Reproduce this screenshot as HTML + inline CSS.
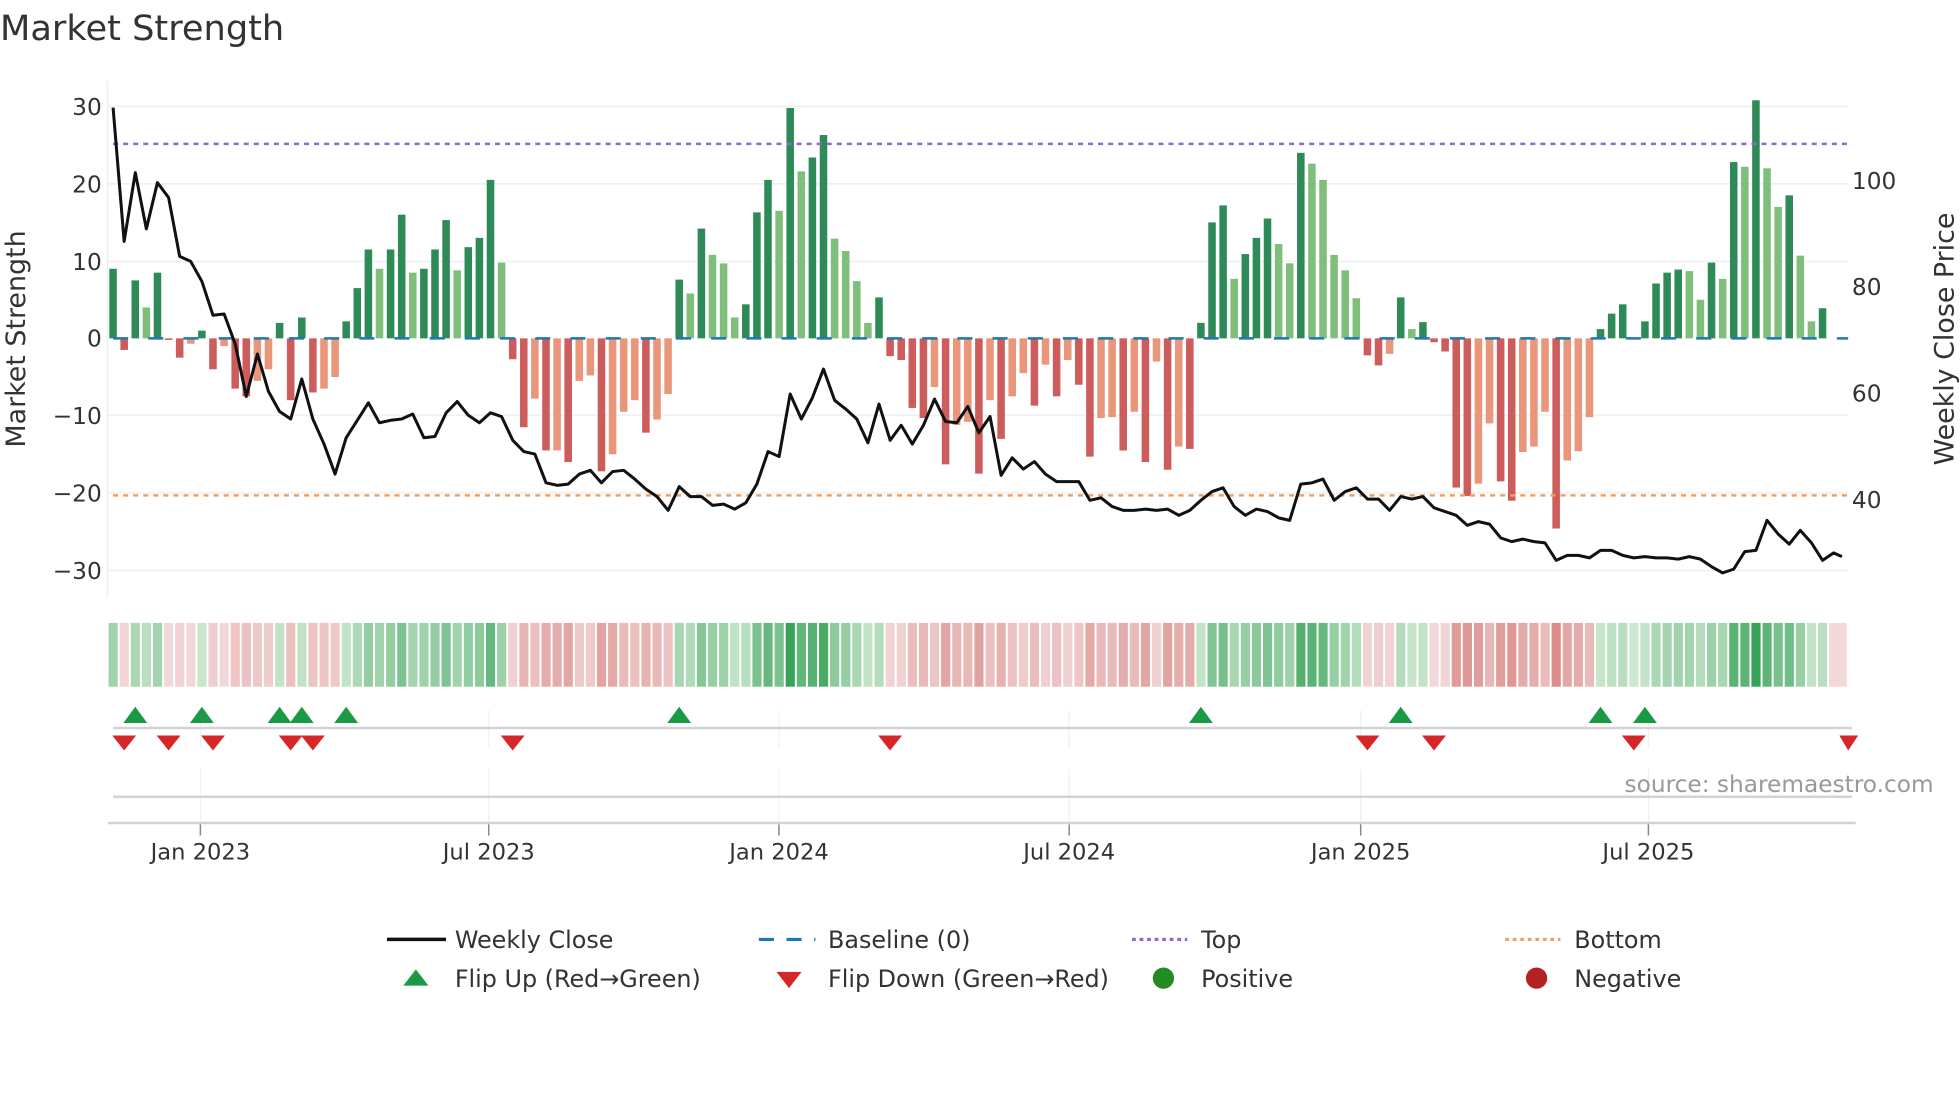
<!DOCTYPE html>
<html><head><meta charset="utf-8"><style>
html,body{margin:0;padding:0;background:#fff;width:1960px;height:1102px;overflow:hidden}
svg{display:block}
text{font-family:"DejaVu Sans","Liberation Sans",sans-serif;fill:#333}
</style></head><body>
<svg id="s" width="1960" height="1102" viewBox="0 0 1560 881" preserveAspectRatio="none" xmlns="http://www.w3.org/2000/svg">
<text x="0" y="32" font-size="28">Market Strength</text>
<g stroke="#eef0f4" stroke-width="1.3">
<line x1="86" x2="1471" y1="85" y2="85"/><line x1="86" x2="1471" y1="147" y2="147"/>
<line x1="86" x2="1471" y1="209" y2="209"/><line x1="86" x2="1471" y1="332" y2="332"/>
<line x1="86" x2="1471" y1="394" y2="394"/><line x1="86" x2="1471" y1="456" y2="456"/>
</g>
<line x1="85.5" x2="85.5" y1="65" y2="478" stroke="#eef0f4" stroke-width="1.3"/>
<g font-size="18.5" text-anchor="end">
<text x="81" y="92">30</text><text x="81" y="154">20</text><text x="81" y="216">10</text>
<text x="81" y="277">0</text><text x="81" y="339">−10</text><text x="81" y="401">−20</text><text x="81" y="463">−30</text>
</g>
<g font-size="18.5">
<text x="1474" y="151">100</text><text x="1474" y="236">80</text><text x="1474" y="321">60</text><text x="1474" y="406">40</text>
</g>
<text font-size="21.5" transform="translate(20,271) rotate(-90)" text-anchor="middle">Market Strength</text>
<text font-size="21.5" transform="translate(1555,271) rotate(-90)" text-anchor="middle">Weekly Close Price</text>
<g id="bars"></g>
<line x1="90" x2="1471" y1="270.5" y2="270.5" stroke="#1f77b4" stroke-width="2" stroke-dasharray="12 16"/>
<line x1="90" x2="1471" y1="115" y2="115" stroke="#9467d0" stroke-width="2" stroke-dasharray="4 4"/>
<line x1="90" x2="1471" y1="396" y2="396" stroke="#f0a060" stroke-width="2" stroke-dasharray="4 4"/>
<polyline id="ln" fill="none" stroke="#111" stroke-width="2.4" stroke-linejoin="round"/>
<g id="heat"></g>
<g id="vg" stroke="#eef0f4" stroke-width="1"></g>
<line x1="90" x2="1474" y1="582" y2="582" stroke="#d3d3d6" stroke-width="2"/>
<line x1="90" x2="1474" y1="637" y2="637" stroke="#d3d3d6" stroke-width="2"/>
<line x1="86" x2="1477" y1="658" y2="658" stroke="#d3d3d6" stroke-width="2"/>
<g id="mk"></g>
<g id="tk" font-size="18" text-anchor="middle"></g>
<text x="1539" y="633" font-size="18.5" text-anchor="end" style="fill:#999">source: sharemaestro.com</text>
<g font-size="19">
<line x1="308" x2="355" y1="751" y2="751" stroke="#111" stroke-width="2.8"/>
<text x="362" y="758">Weekly Close</text>
<line x1="604" x2="649" y1="751" y2="751" stroke="#1f77b4" stroke-width="2.5" stroke-dasharray="12 10"/>
<text x="659" y="758">Baseline (0)</text>
<line x1="901" x2="945" y1="751" y2="751" stroke="#9467d0" stroke-width="2.5" stroke-dasharray="3 3"/>
<text x="956" y="758">Top</text>
<line x1="1198" x2="1242" y1="751" y2="751" stroke="#f0a060" stroke-width="2.5" stroke-dasharray="3 3"/>
<text x="1253" y="758">Bottom</text>
<polygon points="321,788 341,788 331,775" fill="#1a9a45"/>
<text x="362" y="789">Flip Up (Red→Green)</text>
<polygon points="618,777 638,777 628,790" fill="#d62728"/>
<text x="659" y="789">Flip Down (Green→Red)</text>
<circle cx="926" cy="782" r="8.5" fill="#228b22"/>
<text x="956" y="789">Positive</text>
<circle cx="1223" cy="782" r="8.5" fill="#b22222"/>
<text x="1253" y="789">Negative</text>
</g>
</svg>
<script>
var NS="http://www.w3.org/2000/svg";
function el(p,t,a){var e=document.createElementNS(NS,t);for(var k in a)e.setAttribute(k,a[k]);p.appendChild(e);return e;}
var v=[9,-1.5,7.5,4,8.5,-0.2,-2.5,-0.7,1,-4,-1,-6.5,-7.5,-5.5,-4,2,-8,2.7,-7,-6.5,-5,2.2,6.5,11.5,9,11.5,16,8.5,9,11.5,15.3,8.8,11.8,13,20.5,9.8,-2.7,-11.5,-7.8,-14.5,-14.5,-16,-5.5,-4.8,-17.2,-15,-9.5,-8,-12.2,-10.5,-7.2,7.6,5.8,14.2,10.8,9.7,2.7,4.4,16.3,20.5,16.5,29.8,21.6,23.4,26.3,12.9,11.3,7.4,2,5.3,-2.3,-2.8,-9,-10.3,-6.3,-16.3,-11.2,-10.8,-17.5,-8,-13,-7.5,-4.5,-8.7,-3.4,-7.5,-2.8,-6,-15.3,-10.3,-10.2,-14.5,-9.5,-16,-3,-17,-14,-14.3,2,15,17.2,7.7,10.9,13,15.5,12.2,9.7,24,22.6,20.5,10.8,8.8,5.2,-2.2,-3.5,-2,5.3,1.2,2.1,-0.5,-1.7,-19.3,-20.4,-18.8,-11,-18.5,-21,-14.7,-14,-9.5,-24.6,-15.8,-14.6,-10.2,1.2,3.2,4.4,0,2.2,7.1,8.5,8.9,8.7,5,9.8,7.7,22.8,22.2,30.8,22,17,18.5,10.7,2.2,3.9,-0.5];
var light={3:1,7:1,10:1,13:1,14:1,19:1,20:1,24:1,27:1,31:1,35:1,38:1,40:1,42:1,43:1,45:1,46:1,47:1,49:1,50:1,52:1,54:1,55:1,56:1,60:1,62:1,65:1,66:1,67:1,68:1,74:1,76:1,77:1,79:1,81:1,82:1,84:1,86:1,89:1,90:1,92:1,94:1,96:1,101:1,105:1,106:1,108:1,109:1,110:1,111:1,112:1,115:1,117:1,123:1,124:1,127:1,128:1,129:1,131:1,132:1,133:1,142:1,143:1,145:1,147:1,149:1,150:1,152:1,153:1};
var ys=[86,193,138,183,146,158,205,209,225,252,251,275,317,283,313,329,335,303,335,355,379,350,336,322,338,336,335,331,350,349,330,321,332,338,330,333,352,361,363,386,388,387,379,376,386,377,376,383,391,397,408,389,397,397,404,403,407,402,387,361,365,315,335,318,295,320,327,335,354,323,352,340,355,340,319,337,338,325,346,333,380,366,375,369,379,385,385,385,400,398,405,408,408,407,408,407,412,408,400,393,390,405,412,407,409,414,416,387,386,383,400,393,390,399,399,408,397,399,397,406,409,412,420,417,419,430,433,431,433,434,448,444,444,446,440,440,444,446,445,446,446,447,445,447,453,458,455,441,440,416,427,435,424,434,448,442];
var X=function(i){return 90+i*8.835;};
var bars=document.getElementById('bars'),heat=document.getElementById('heat');
var Z=270.5,K=6.18;
for(var i=0;i<v.length;i++){
 var x=X(i),h=v[i]*K,c;
 if(v[i]>=0)c=light[i]?'#7fbf7b':'#2e8b57';else c=light[i]?'#e9967a':'#cd5c5c';
 if(v[i]!==0&&i<155)el(bars,'rect',{x:x-3,y:v[i]>0?Z-h:Z,width:6,height:Math.abs(h),fill:c});
 var a=Math.min(1,Math.abs(v[i])/30),col;
 if(v[i]>=0){col='rgb('+Math.round(205-150*a)+','+Math.round(232-70*a)+','+Math.round(208-120*a)+')';}
 else{col='rgb('+Math.round(242-30*a)+','+Math.round(218-95*a)+','+Math.round(218-100*a)+')';}
 el(heat,'rect',{x:x-3.6,y:498,width:i==155?14:7.3,height:51,fill:col});
}
var pts=[];for(var i=0;i<ys.length;i++)pts.push(X(i).toFixed(1)+','+ys[i]);
pts.push('1466,445');
document.getElementById('ln').setAttribute('points',pts.join(' '));
var mk=document.getElementById('mk');
[2,8,15,17,21,51,98,116,134,138].forEach(function(i){var x=X(i);el(mk,'polygon',{points:(x-9.5)+',578 '+(x+9.5)+',578 '+x+',565',fill:'#1a9a45'});});
[1,5,9,16,18,36,70,113,119,137].forEach(function(i){var x=X(i);el(mk,'polygon',{points:(x-9.5)+',588 '+(x+9.5)+',588 '+x+',600',fill:'#d62728'});});
el(mk,'polygon',{points:'1464,588 1479,588 1471,600',fill:'#d62728'});
var tk=document.getElementById('tk'),vg=document.getElementById('vg');
[[159.5,'Jan 2023'],[389,'Jul 2023'],[620,'Jan 2024'],[851,'Jul 2024'],[1083,'Jan 2025'],[1312,'Jul 2025']].forEach(function(t){
 el(vg,'line',{x1:t[0],x2:t[0],y1:568,y2:598});
 el(vg,'line',{x1:t[0],x2:t[0],y1:615,y2:658});
 el(tk,'line',{x1:t[0],x2:t[0],y1:659,y2:668,stroke:'#888','stroke-width':1.2});
 var e=el(tk,'text',{x:t[0],y:687});e.textContent=t[1];
});
</script>
</body></html>
